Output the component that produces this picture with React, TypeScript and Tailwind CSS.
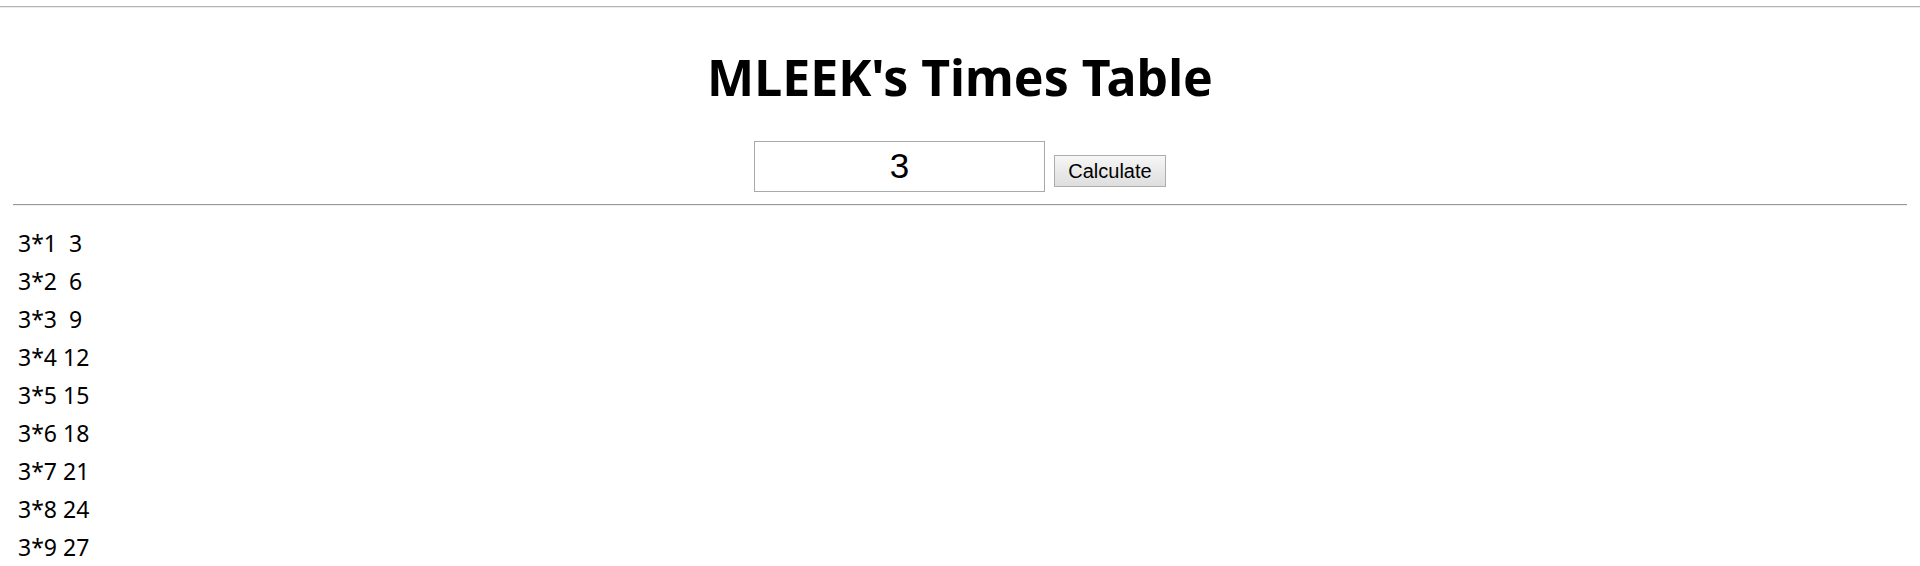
import { useState } from 'react'

export default function App() {
  const [value, setValue] = useState('3')
  const [num, setNum] = useState(3)

  const rows = Array.from({ length: 9 }, (_, i) => i + 1)

  return (
    <div className="min-h-screen bg-white text-black" style={{ fontFamily: '"Noto Sans", "Open Sans", sans-serif' }}>
      <div className="pt-[6px]">
        <div className="h-px bg-[#b4b4b4]" />
        <div className="h-px bg-[#ececec]" />
      </div>

      <div>
        <h1 className="mt-[45px] text-center text-[50px] leading-[49px] font-bold">MLEEK&#39;s Times Table</h1>

        <div className="mt-[39px] flex items-baseline justify-center gap-[9px]">
          <input
            value={value}
            onChange={(e) => setValue(e.target.value)}
            className="h-[51px] w-[291px] border border-[#a9a9a9] bg-white text-center text-[35px] outline-none"
            style={{ fontFamily: '"Liberation Sans", Arial, sans-serif' }}
          />
          <button
            onClick={() => setNum(parseInt(value) || 0)}
            className="h-[32px] w-[112px] border border-[#adadad] bg-gradient-to-b from-[#f6f6f6] to-[#dedede] text-[20px] leading-none"
            style={{ fontFamily: '"Liberation Sans", Arial, sans-serif' }}
          >
            Calculate
          </button>
        </div>
      </div>

      <div className="mx-[13px] mt-[12px]">
        <div className="h-px bg-[#9a9a9a]" />
        <div className="h-px bg-[#eeeeee]" />
      </div>

      <div className="mt-[18px] pl-[18px] text-[23px] leading-[38px]">
        {rows.map((i) => (
          <div key={i} className="whitespace-pre">
            {num}*{i} {String(num * i).padStart(2, ' ')}
          </div>
        ))}
      </div>
    </div>
  )
}
